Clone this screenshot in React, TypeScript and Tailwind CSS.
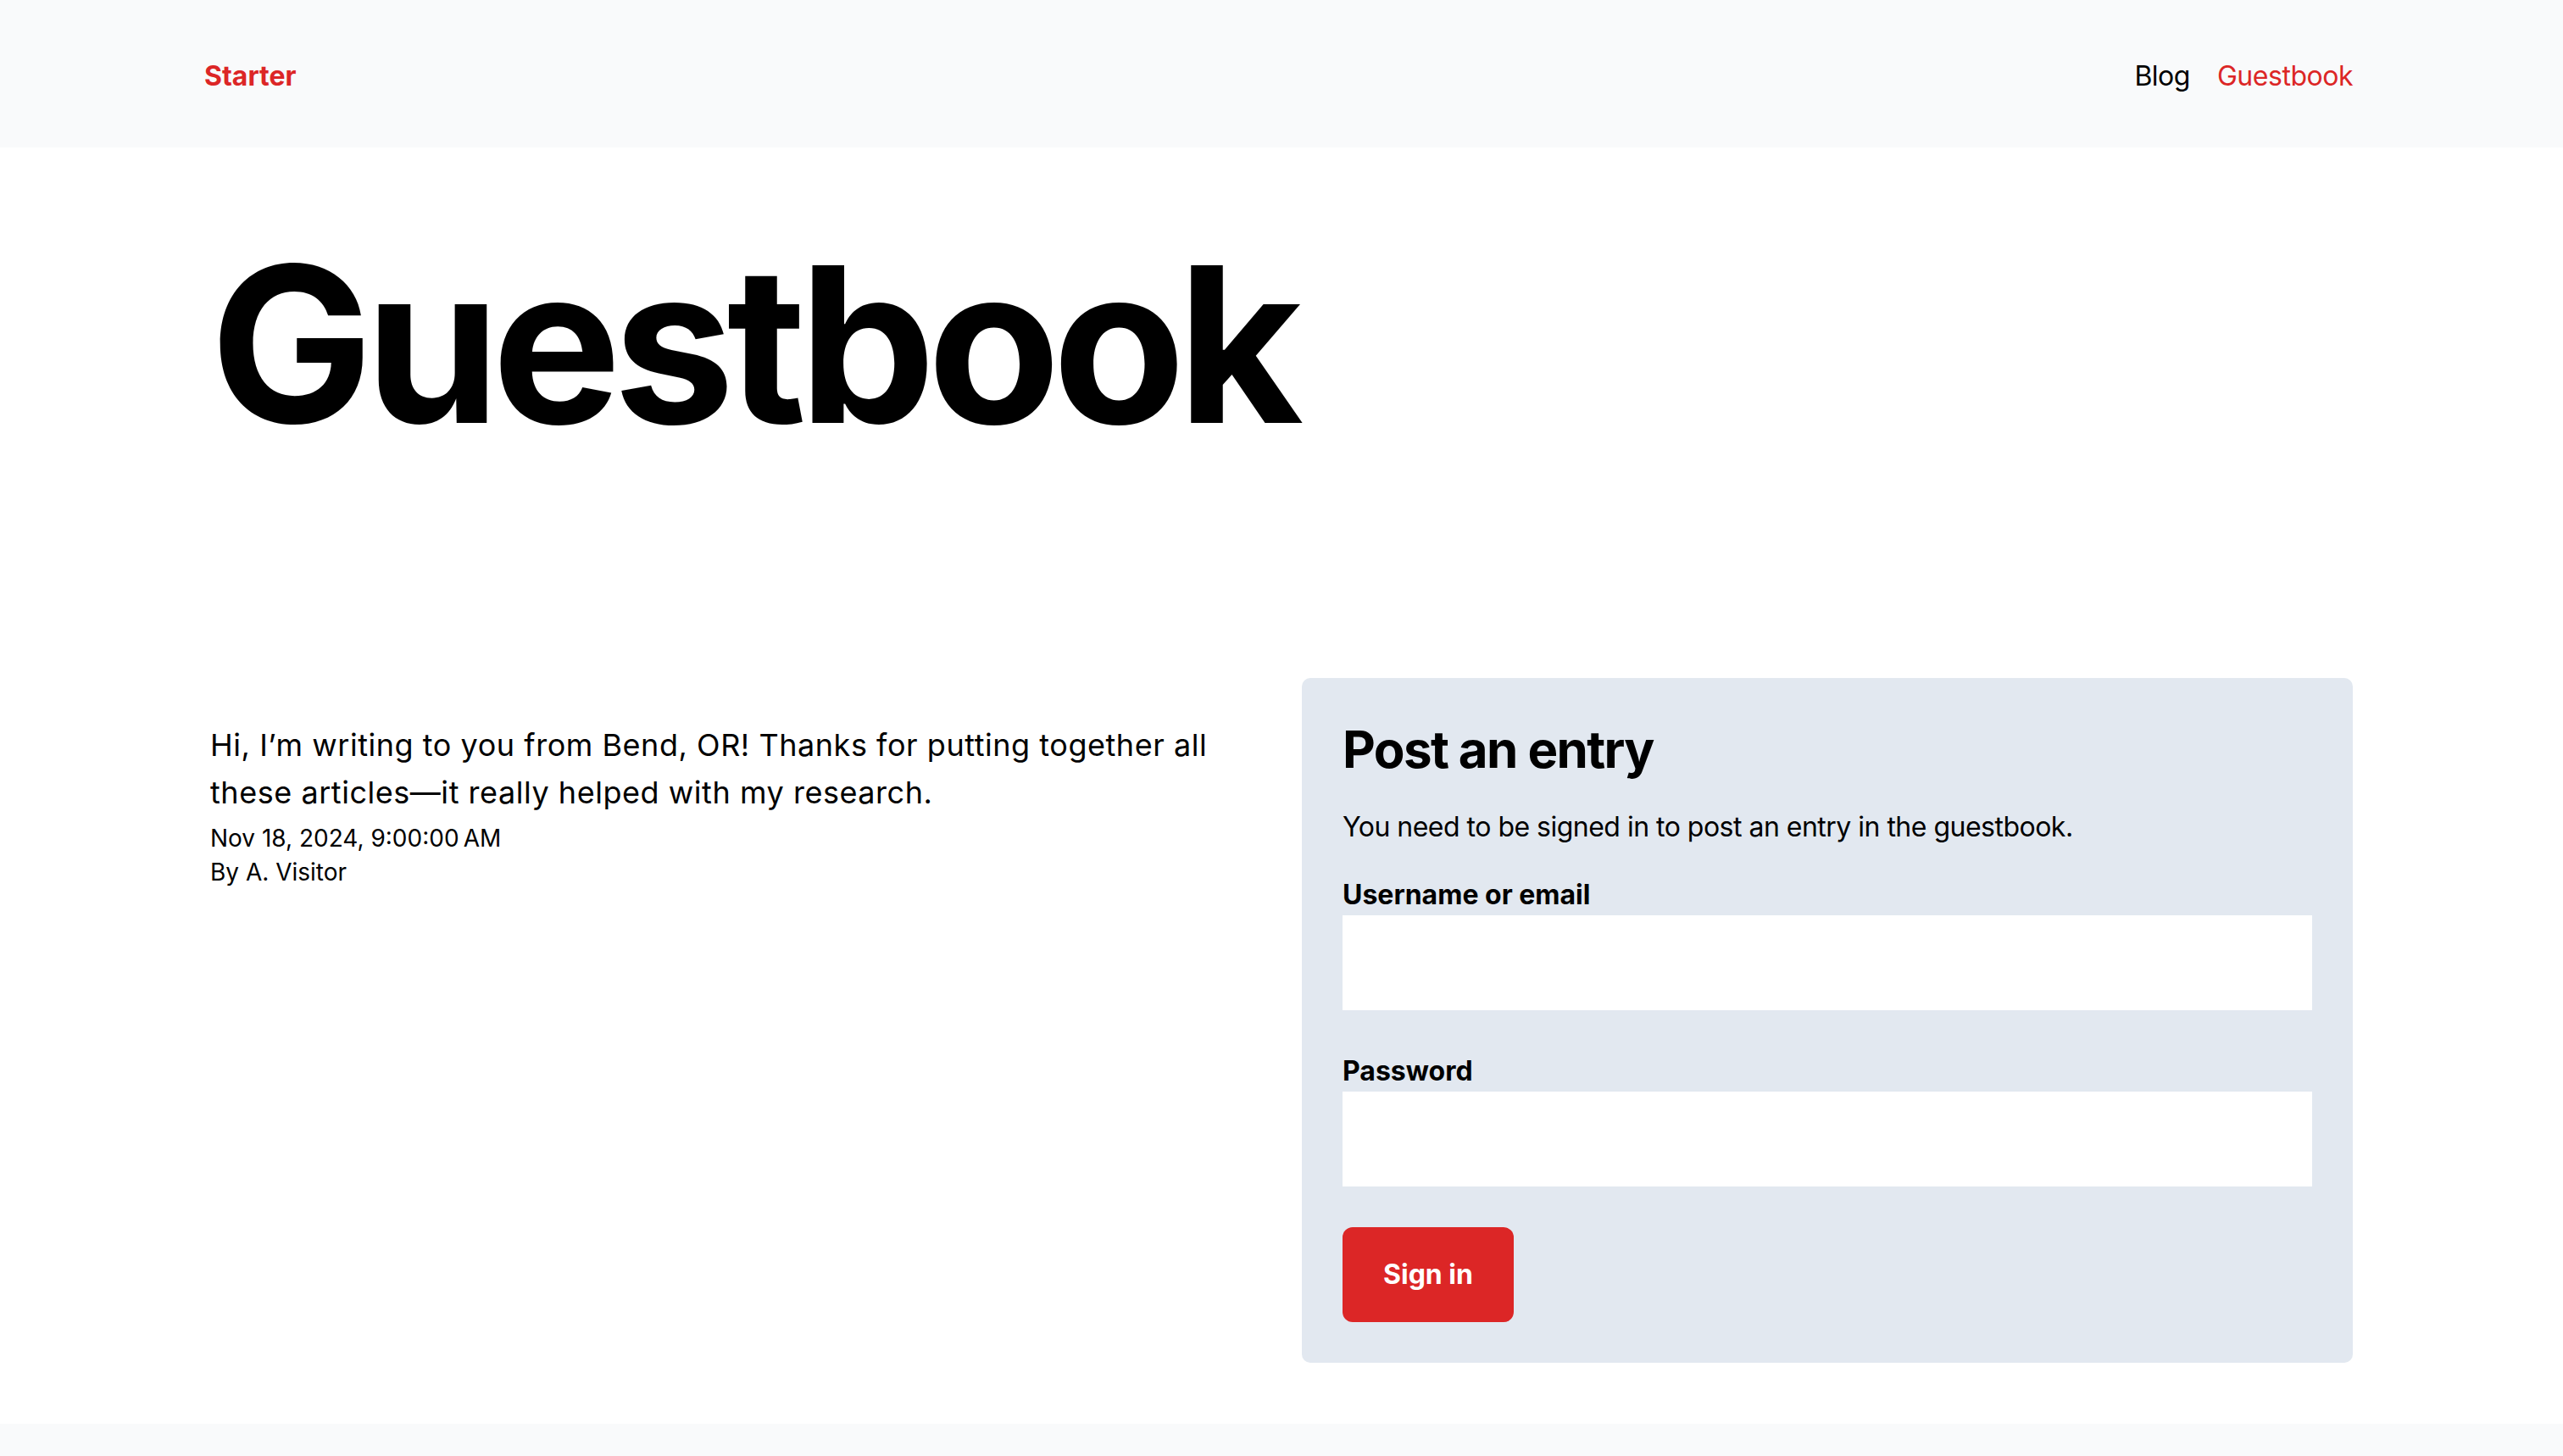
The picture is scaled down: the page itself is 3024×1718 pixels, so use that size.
const entries = [
  {
    id: 1,
    message:
      "Hi, I\u2019m writing to you from Bend, OR! Thanks for putting together all these articles\u2014it really helped with my research.",
    createdAt: "Nov 18, 2024, 9:00:00\u202FAM",
    author: "A. Visitor",
  },
];

const Header = () => {
  return (
    <header className="bg-[#f9fafb] h-[174px] pt-[6px] flex items-center justify-between pl-[241px] pr-[248px]">
      <a className="text-[32px] font-bold text-[#dc2626]">Starter</a>
      <nav className="flex items-center gap-[32px] text-[32px] tracking-[-0.015em]">
        <a className="text-black">Blog</a>
        <a className="text-[#dc2626]">Guestbook</a>
      </nav>
    </header>
  );
};

const SignInForm = () => {
  return (
    <div className="bg-[#e2e8f0] rounded-[10px] p-[48px]">
      <h2 className="text-[60px] leading-[72px] font-bold tracking-[-0.027em] text-black mb-[32px]">
        Post an entry
      </h2>
      <p className="text-[32px] leading-[48px] tracking-[-0.016em] text-black mb-[32px]">
        You need to be signed in to post an entry in the guestbook.
      </p>
      <form className="flex flex-col">
        <label className="text-[32px] leading-[48px] font-bold text-black">
          Username or email
        </label>
        <input type="text" className="bg-white h-[112px] w-full mb-[48px] outline-none" />
        <label className="text-[32px] leading-[48px] font-bold text-black">
          Password
        </label>
        <input type="password" className="bg-white h-[112px] w-full mb-[48px] outline-none" />
        <div>
          <button
            type="button"
            className="bg-[#dc2626] text-white text-[32px] leading-[48px] font-bold px-[48px] py-[32px] rounded-[12px]"
          >
            Sign in
          </button>
        </div>
      </form>
    </div>
  );
};

const App = () => {
  return (
    <div className="min-h-screen bg-white font-['Inter','Noto_Sans',sans-serif] text-black">
      <Header />
      <main className="pl-[248px] pr-[248px] pt-[104px] pb-[72px]">
        <h1 className="text-[256px] leading-[256px] font-bold tracking-[-0.037em] mb-[266px]">
          Guestbook
        </h1>
        <div className="grid grid-cols-2 gap-[48px] items-start">
          <ul className="pt-[51px]">
            {entries.map((entry) => (
              <li key={entry.id}>
                <p className="text-[36px] leading-[56px] tracking-[0.015em]">{entry.message}</p>
                <p className="text-[28px] leading-[40px] mt-[6px]">{entry.createdAt}</p>
                <p className="text-[28px] leading-[40px]">By {entry.author}</p>
              </li>
            ))}
          </ul>
          <SignInForm />
        </div>
      </main>
      <footer className="bg-[#f9fafb] h-[160px]"></footer>
    </div>
  );
};

export default App;
